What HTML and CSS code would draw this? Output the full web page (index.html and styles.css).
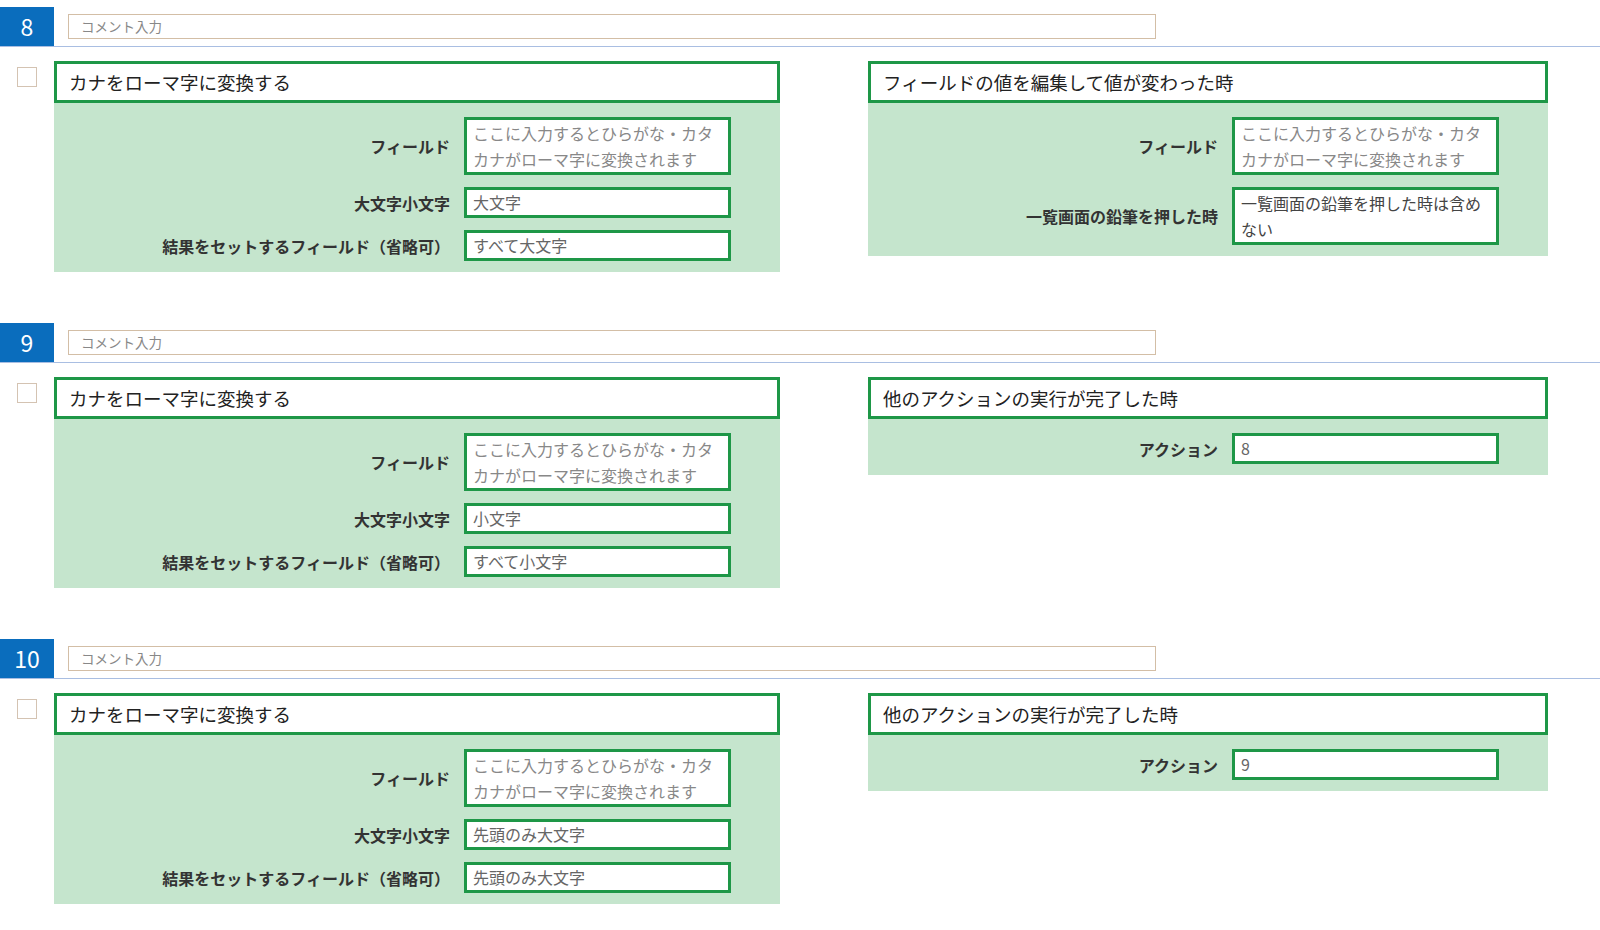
FILE: index.html
```html
<!DOCTYPE html>
<html lang="ja">
<head>
  <meta charset="UTF-8" />
  <meta name="viewport" content="width=device-width, initial-scale=1.0"/>
  <title>アクション一覧</title>
  <link rel="stylesheet" href="styles.css">
</head>
<body>
  <div class="section">
    <div class="head">
      <div class="num">8</div>
      <div class="comment">コメント入力</div>
    </div>
    <div class="row">
      <div class="check"></div>
      <div class="card left">
        <div class="card-title">カナをローマ字に変換する</div>
        <div class="card-body">
          <div class="field">
            <div class="label">フィールド</div>
            <div class="box two hint">ここに入力するとひらがな・カタカナがローマ字に変換されます</div>
          </div>
          <div class="field">
            <div class="label">大文字小文字</div>
            <div class="box">大文字</div>
          </div>
          <div class="field">
            <div class="label">結果をセットするフィールド（省略可）</div>
            <div class="box">すべて大文字</div>
          </div>
        </div>
      </div>
      <div class="card right">
        <div class="card-title">フィールドの値を編集して値が変わった時</div>
        <div class="card-body">
          <div class="field">
            <div class="label">フィールド</div>
            <div class="box two hint">ここに入力するとひらがな・カタカナがローマ字に変換されます</div>
          </div>
          <div class="field">
            <div class="label">一覧画面の鉛筆を押した時</div>
            <div class="box two dark">一覧画面の鉛筆を押した時は含めない</div>
          </div>
        </div>
      </div>
    </div>
  </div>

  <div class="section">
    <div class="head">
      <div class="num">9</div>
      <div class="comment">コメント入力</div>
    </div>
    <div class="row">
      <div class="check"></div>
      <div class="card left">
        <div class="card-title">カナをローマ字に変換する</div>
        <div class="card-body">
          <div class="field">
            <div class="label">フィールド</div>
            <div class="box two hint">ここに入力するとひらがな・カタカナがローマ字に変換されます</div>
          </div>
          <div class="field">
            <div class="label">大文字小文字</div>
            <div class="box">小文字</div>
          </div>
          <div class="field">
            <div class="label">結果をセットするフィールド（省略可）</div>
            <div class="box">すべて小文字</div>
          </div>
        </div>
      </div>
      <div class="card right">
        <div class="card-title">他のアクションの実行が完了した時</div>
        <div class="card-body">
          <div class="field">
            <div class="label">アクション</div>
            <div class="box">8</div>
          </div>
        </div>
      </div>
    </div>
  </div>

  <div class="section">
    <div class="head">
      <div class="num">10</div>
      <div class="comment">コメント入力</div>
    </div>
    <div class="row">
      <div class="check"></div>
      <div class="card left">
        <div class="card-title">カナをローマ字に変換する</div>
        <div class="card-body">
          <div class="field">
            <div class="label">フィールド</div>
            <div class="box two hint">ここに入力するとひらがな・カタカナがローマ字に変換されます</div>
          </div>
          <div class="field">
            <div class="label">大文字小文字</div>
            <div class="box">先頭のみ大文字</div>
          </div>
          <div class="field">
            <div class="label">結果をセットするフィールド（省略可）</div>
            <div class="box">先頭のみ大文字</div>
          </div>
        </div>
      </div>
      <div class="card right">
        <div class="card-title">他のアクションの実行が完了した時</div>
        <div class="card-body">
          <div class="field">
            <div class="label">アクション</div>
            <div class="box">9</div>
          </div>
        </div>
      </div>
    </div>
  </div>
</body>
</html>
```

FILE: styles.css
```css
body {
  margin: 0;
  padding: 7px 0 0;
  font-family: "Noto Sans CJK JP", "Noto Sans", sans-serif;
  background: #fff;
  color: #222;
}

.section {
  margin-bottom: 51px;
}

.head {
  display: flex;
  align-items: center;
  border-bottom: 1px solid #a9bee2;
}

.num {
  width: 54px;
  height: 39px;
  background: #0a6dbd;
  color: #fff;
  font-size: 23px;
  line-height: 39px;
  text-align: center;
}

.comment {
  margin-left: 14px;
  width: 1074px;
  height: 23px;
  border: 1px solid #d3bea6;
  padding-left: 12px;
  font-size: 13.5px;
  line-height: 23px;
  color: #888;
}

.row {
  display: flex;
  align-items: flex-start;
  margin-top: 14px;
}

.check {
  width: 18px;
  height: 18px;
  border: 1px solid #d4c3b2;
  margin: 6px 17px 0 17px;
}

.card.left {
  width: 726px;
}

.card.right {
  width: 680px;
  margin-left: 88px;
}

.card-title {
  height: 36px;
  border: 3px solid #1e9747;
  background: #fff;
  padding-left: 12px;
  font-size: 18.5px;
  line-height: 37px;
  color: #222;
}

.card-body {
  background: #c5e5cd;
  padding: 14px 49px 11px 0;
  display: flex;
  flex-direction: column;
  gap: 12px;
}

.field {
  display: flex;
  align-items: center;
  justify-content: flex-end;
}

.label {
  font-size: 16px;
  font-weight: bold;
  color: #333;
  margin-right: 14px;
}

.box {
  width: 245px;
  border: 3px solid #1e9747;
  background: #fff;
  padding: 0 10px 0 6px;
  font-size: 16px;
  line-height: 25px;
  color: #666;
}

.box.two {
  line-height: 26px;
}

.box.hint {
  color: #888;
}

.box.dark {
  color: #444;
}
```
